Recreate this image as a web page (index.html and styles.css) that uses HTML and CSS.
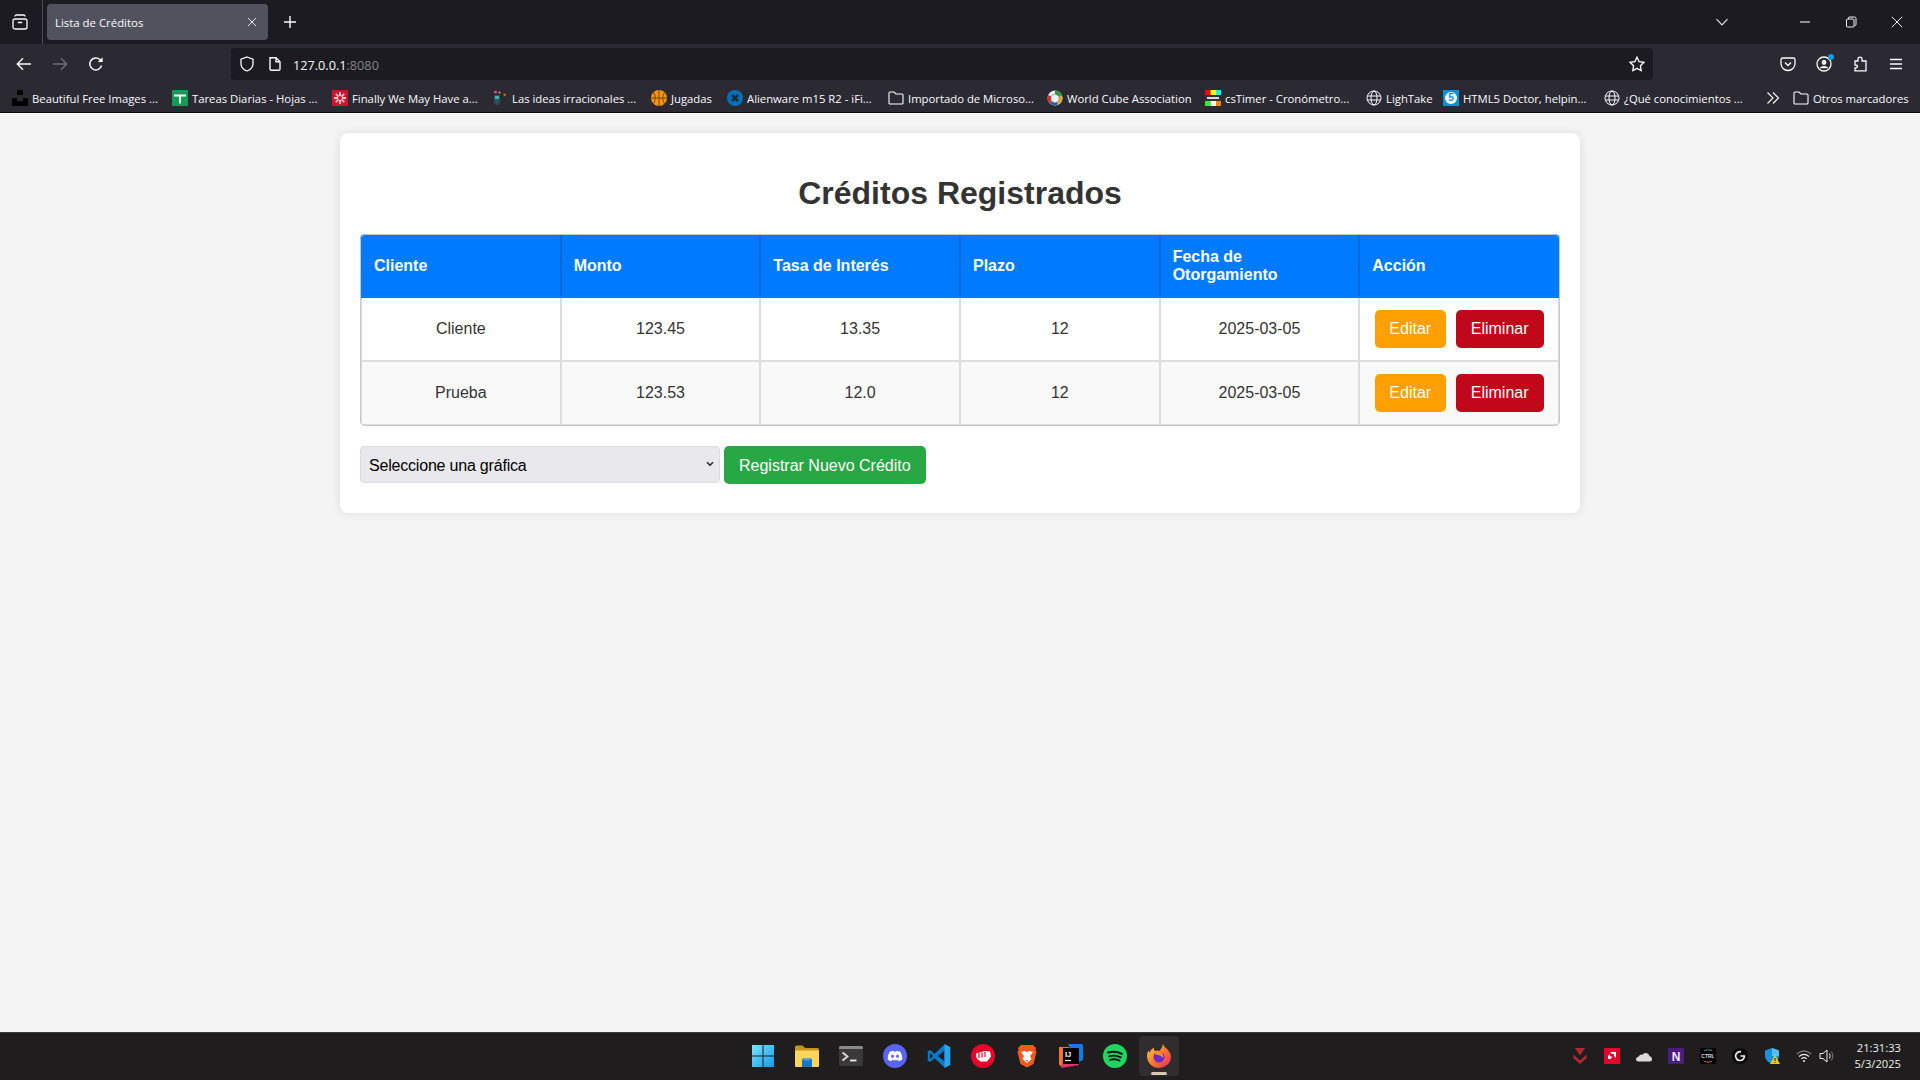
FILE: index.html
```html
<!DOCTYPE html>
<html lang="es">
<head>
<meta charset="utf-8">
<title>Lista de Créditos</title>
<link rel="stylesheet" href="styles.css">
</head>
<body>
<div class="browser">
  <header class="tabbar">
    <div class="tabs-btn">
      <svg class="i16" viewBox="0 0 16 16" fill="none" stroke="#fbfbfe" stroke-width="1.3"><rect x="1" y="5" width="14" height="10" rx="2"/><path d="M3 2.6Q3 1 4.6 1h6.8Q13 1 13 2.6M5.8 8.5h4.4"/></svg>
    </div>
    <div class="tab">
      <span class="tab-title">Lista de Créditos</span>
      <svg class="tab-close" viewBox="0 0 10 10" fill="none" stroke="#e4e4ea" stroke-width="1"><path d="M1 1l8 8M9 1l-8 8"/></svg>
    </div>
    <svg class="tab-new" viewBox="0 0 14 14" fill="none" stroke="#fbfbfe" stroke-width="1.4"><path d="M7 1v12M1 7h12"/></svg>
    <div class="tabbar-fill"></div>
    <svg class="tab-list" viewBox="0 0 14 8" fill="none" stroke="#e4e4ea" stroke-width="1.2"><path d="M1.5 1.2L7 6.8l5.5-5.6"/></svg>
    <div class="winctl">
      <svg class="i12" viewBox="0 0 12 12" fill="none" stroke="#eee" stroke-width="1.1"><path d="M1 6h10"/></svg>
      <svg class="i12" viewBox="0 0 12 12" fill="none" stroke="#eee" stroke-width="1"><rect x="1.5" y="3" width="7.5" height="8" rx="1"/><path d="M3.5 3V2Q3.5 1 4.5 1h5Q11 1 11 2.5v6q0 1-1.5 1H9"/></svg>
      <svg class="i12" viewBox="0 0 12 12" fill="none" stroke="#eee" stroke-width="1"><path d="M.8.8l10.4 10.4M11.2.8L.8 11.2"/></svg>
    </div>
  </header>

  <nav class="toolbar">
    <div class="nav-btns">
      <svg class="i16" viewBox="0 0 16 16" fill="none" stroke="#fbfbfe" stroke-width="1.4"><path d="M15 8H1.5M7 2.2L1.3 8 7 13.8"/></svg>
      <svg class="i16" viewBox="0 0 16 16" fill="none" stroke="#6f6e76" stroke-width="1.4"><path d="M1 8h13.5M9 2.2L14.7 8 9 13.8"/></svg>
      <svg class="i16" viewBox="0 0 16 16" fill="none" stroke="#fbfbfe" stroke-width="1.4"><path d="M13.6 9.5A6 6 0 1 1 12 3.6L14 5.6"/><path d="M14.6 1.2v4.9H9.8" fill="#fbfbfe" stroke="none"/></svg>
    </div>
    <div class="urlbar">
      <svg class="i16" viewBox="0 0 16 16" fill="none" stroke="#fbfbfe" stroke-width="1.3"><path d="M8 1l6 2.2v4.6c0 3.4-2.6 6-6 7.2-3.4-1.2-6-3.8-6-7.2V3.2z"/></svg>
      <svg class="i16" viewBox="0 0 16 16" fill="none" stroke="#fbfbfe" stroke-width="1.4"><path d="M3 1.7h6l4 4V13q0 1.3-1.3 1.3H4.3Q3 14.3 3 13zM9 1.7v4h4"/></svg>
      <span class="url">127.0.0.1<span class="url-port">:8080</span></span>
      <svg class="star i16" viewBox="0 0 16 16" fill="none" stroke="#fbfbfe" stroke-width="1.3"><path d="M8 1.2l2.1 4.4 4.8.7-3.5 3.4.8 4.8L8 12.3l-4.2 2.2.8-4.8L1.1 6.3l4.8-.7z"/></svg>
    </div>
    <div class="tools">
      <svg class="i16" viewBox="0 0 16 16" fill="none" stroke="#fbfbfe" stroke-width="1.3"><path d="M2.8 2h10.4Q15 2 15 3.8v3.7C15 11.500 11.800 14.500 8 14.500S1 11.500 1 7.500V3.800Q1 2 2.800 2z"/><path d="M5 6.500l3 3 3-3"/></svg>
      <span class="profile">
        <svg class="i16" viewBox="0 0 16 16" fill="none" stroke="#fbfbfe" stroke-width="1.3"><circle cx="8" cy="8" r="7"/><circle cx="8" cy="6.500" r="2.400" fill="#fbfbfe" stroke="none"/><path d="M3.500 12.300Q5 10 8 10t4.500 2.300" fill="#fbfbfe" stroke="none"/></svg>
        <span class="notify"></span>
      </span>
      <svg class="i16" viewBox="0 0 16 16" fill="none" stroke="#fbfbfe" stroke-width="1.3"><path d="M8 1.200Q10 1.200 10 3.200V5H14V14.800H3V12Q5.500 12 5.500 10.500T3 9V5H6V3.200Q6 1.200 8 1.200z"/></svg>
      <svg class="i16" viewBox="0 0 16 16" fill="none" stroke="#fbfbfe" stroke-width="1.3"><path d="M2 3.500h12M2 8h12M2 12.500h12"/></svg>
    </div>
  </nav>

  <div class="bookmarks">
    <a class="bm"><svg class="i16" viewBox="0 0 16 16"><path d="M5 0h6v5H5zM0 8h5v3h6V8h5v8H0z" fill="#000"/></svg><span>Beautiful Free Images ...</span></a>
    <a class="bm"><svg class="i16" viewBox="0 0 16 16"><rect width="16" height="16" rx="1" fill="#0f9d58"/><path d="M2 4.500h12v2H9v7H7v-7H2z" fill="#fff"/></svg><span>Tareas Diarias - Hojas ...</span></a>
    <a class="bm"><svg class="i16" viewBox="0 0 16 16"><rect width="16" height="16" fill="#d3112f"/><path d="M8 2v12M2 8h12M3.800 3.800l8.400 8.400M12.200 3.800l-8.400 8.400" stroke="#f5c7cf" stroke-width="1.800"/><circle cx="8" cy="8" r="2" fill="#d3112f"/></svg><span>Finally We May Have a...</span></a>
    <a class="bm"><svg class="i16" viewBox="0 0 16 16"><circle cx="3.500" cy="2" r="1.500" fill="#d14fa0"/><path d="M11 4.500l3-1-1 3z" fill="#ee6c2b"/><circle cx="7.500" cy="2.500" r="1" fill="#e9b43a"/><path d="M2 5h6v5.500Q8 15 5 15t-3-4.500z" fill="#2a4f5c"/><path d="M3 6h4v3H3z" fill="#3cb4a0"/></svg><span>Las ideas irracionales ...</span></a>
    <a class="bm"><svg class="i16" viewBox="0 0 16 16"><circle cx="8" cy="8" r="8" fill="#f5940f"/><path d="M8 0v16M0 8h16M2.500 2.200Q6 8 2.500 13.800M13.500 2.200Q10 8 13.500 13.800" stroke="#6b3d08" stroke-width=".9" fill="none"/></svg><span>Jugadas</span></a>
    <a class="bm"><svg class="i16" viewBox="0 0 16 16"><circle cx="8" cy="8" r="8" fill="#0071bc"/><path d="M5 5l6 6M11 5l-6 6" stroke="#1c2a3a" stroke-width="2.600"/></svg><span>Alienware m15 R2 - iFi...</span></a>
    <a class="bm"><svg class="i16" viewBox="0 0 16 16" fill="none" stroke="#fbfbfe" stroke-width="1.100"><path d="M1 3q0-1 1-1h4l2 2h6q1 0 1 1v8q0 1-1 1H2q-1 0-1-1z"/></svg><span>Importado de Microso...</span></a>
    <a class="bm"><svg class="i16" viewBox="0 0 16 16"><circle cx="8" cy="8" r="7.500" fill="#eee"/><path d="M8 .5A7.500 7.500 0 0 1 15 6L8 8z" fill="#2a9d3f"/><path d="M15 6a7.500 7.500 0 0 1-4 8.500L8 8z" fill="#e0b21c"/><path d="M11 14.500a7.500 7.500 0 0 1-8 -1L8 8z" fill="#1a5fb4"/><path d="M3 13.500A7.500 7.500 0 0 1 1 5L8 8z" fill="#c8352b"/><path d="M8 4l4 2v5l-4 2-4-2V6z" fill="#f2f2f2" stroke="#555" stroke-width=".5"/></svg><span>World Cube Association</span></a>
    <a class="bm"><svg class="i16" viewBox="0 0 16 16"><path d="M0 0h5.500v5H0z" fill="#f00"/><path d="M5.500 0H11v5H5.500z" fill="#ff0"/><path d="M11 0h5v5h-5z" fill="#0ff"/><path d="M0 5h16v6H0z" fill="#333"/><path d="M2 7h12v2H2z" fill="#ddd"/><path d="M0 11h5.500v5H0z" fill="#3e3"/><path d="M5.500 11H11v5H5.500z" fill="#fff"/><path d="M11 11h5v5h-5z" fill="#f80"/></svg><span>csTimer - Cronómetro...</span></a>
    <a class="bm"><svg class="i16" viewBox="0 0 16 16" fill="none" stroke="#fbfbfe" stroke-width="1"><circle cx="8" cy="8" r="7"/><ellipse cx="8" cy="8" rx="3" ry="7"/><path d="M1.300 6h13.400M1.300 10h13.400"/></svg><span>LighTake</span></a>
    <a class="bm"><svg class="i16" viewBox="0 0 16 16"><rect width="16" height="16" fill="#0d8fd8"/><circle cx="8" cy="8" r="6" fill="#fff"/><text x="8" y="11" text-anchor="middle" class="fav-text" fill="#0d8fd8">5</text></svg><span>HTML5 Doctor, helpin...</span></a>
    <a class="bm"><svg class="i16" viewBox="0 0 16 16" fill="none" stroke="#fbfbfe" stroke-width="1"><circle cx="8" cy="8" r="7"/><ellipse cx="8" cy="8" rx="3" ry="7"/><path d="M1.300 6h13.400M1.300 10h13.400"/></svg><span>¿Qué conocimientos ...</span></a>
    <a class="bm"><svg class="i14" viewBox="0 0 14 14" fill="none" stroke="#fbfbfe" stroke-width="1.100"><path d="M1.500 1.500L7 7l-5.500 5.500M7 1.500L12.500 7 7 12.500"/></svg></a>
    <a class="bm"><svg class="i16" viewBox="0 0 16 16" fill="none" stroke="#fbfbfe" stroke-width="1.100"><path d="M1 3q0-1 1-1h4l2 2h6q1 0 1 1v8q0 1-1 1H2q-1 0-1-1z"/></svg><span>Otros marcadores</span></a>
  </div>

  <main class="viewport">
    <section class="card">
      <h1 class="title">Créditos Registrados</h1>
      <div class="table-wrap">
        <table class="credits">
          <thead>
            <tr><th>Cliente</th><th>Monto</th><th>Tasa de Interés</th><th>Plazo</th><th>Fecha de Otorgamiento</th><th>Acción</th></tr>
          </thead>
          <tbody>
            <tr><td>Cliente</td><td>123.45</td><td>13.35</td><td>12</td><td>2025-03-05</td>
              <td><a class="btn btn-edit">Editar</a><a class="btn btn-del">Eliminar</a></td></tr>
            <tr><td>Prueba</td><td>123.53</td><td>12.0</td><td>12</td><td>2025-03-05</td>
              <td><a class="btn btn-edit">Editar</a><a class="btn btn-del">Eliminar</a></td></tr>
          </tbody>
        </table>
      </div>
      <div class="actions">
        <div class="select-wrap">
          <select class="chart-select"><option>Seleccione una gráfica</option></select>
          <svg class="select-arrow" viewBox="0 0 8 6" fill="none" stroke="#222" stroke-width="1.500"><path d="M1 1.200l3 3 3-3"/></svg>
        </div>
        <a class="btn btn-new">Registrar Nuevo Crédito</a>
      </div>
    </section>
  </main>

  <footer class="taskbar">
    <div></div>
    <div class="apps">
      <svg class="i24" viewBox="0 0 24 24"><defs><linearGradient id="w" x1="0" y1="0" x2="1" y2="1"><stop offset="0" stop-color="#7ee3fb"/><stop offset="1" stop-color="#0d9cf0"/></linearGradient></defs><path d="M1 1h10.500v10.500H1zM12.500 1H23v10.500H12.500zM1 12.500h10.500V23H1zM12.500 12.500H23V23H12.500z" fill="url(#w)"/></svg>
      <svg class="i24" viewBox="0 0 24 24"><path d="M0 3q0-1.500 1.500-1.500h6L10 4h12.500Q24 4 24 5.500V8H0z" fill="#c8941a"/><path d="M0 6.500h24V22q0 1-1 1H1q-1 0-1-1z" fill="#fcd55e"/><path d="M7 16q0-1.500 1.500-1.500h7Q17 14.500 17 16v7H7z" fill="#1a76c4"/><path d="M9 14.500h6v2H9z" fill="#49a4e8"/></svg>
      <svg class="i24" viewBox="0 0 24 24"><rect y="2" width="24" height="20" rx="1.500" fill="#3a3a3a"/><path d="M0 3.500Q0 2 1.500 2h21Q24 2 24 3.500V5H0z" fill="#8a8a8a"/><path d="M3.500 8.500l5 4-5 4" stroke="#ddd" stroke-width="1.800" fill="none"/><path d="M11 16.500h6.500" stroke="#eee" stroke-width="1.800"/></svg>
      <svg class="i24" viewBox="0 0 24 24"><circle cx="12" cy="12" r="12" fill="#5865f2"/><path d="M6.500 8Q9 6.800 10.500 6.800l.4.8h2.200l.4-.8Q15 6.800 17.500 8q2 3.500 1.800 7.500-1.600 1.300-3.500 1.700l-.9-1.300q-2.900.8-5.800 0l-.9 1.300q-1.900-.4-3.500-1.700Q4.500 11.500 6.500 8z" fill="#fff"/><ellipse cx="9.500" cy="12.200" rx="1.400" ry="1.600" fill="#5865f2"/><ellipse cx="14.500" cy="12.200" rx="1.400" ry="1.600" fill="#5865f2"/></svg>
      <svg class="i24" viewBox="0 0 24 24"><path fill-rule="evenodd" d="M17.500.2L7.800 9.700 3 6 .8 7.200v9.600L3 18l4.800-3.700 9.700 9.500 5.700-2.700V2.900zM17.500 6.500L11 12l6.500 5.500zM3 9v6l3-3z" fill="#0a78c8"/><path d="M17.500.2l5.700 2.700v18.200l-5.700 2.700z" fill="#2aa3ee"/></svg>
      <svg class="i24" viewBox="0 0 24 24"><circle cx="12" cy="12" r="12" fill="#e5062a"/><path d="M5 9.500l9-2.500 5 .5 1 5-2 2.500-2 2.500H9.500L7 15.500 5.500 14z" fill="#fff"/><path d="M8 9v5M11 8.500v5M14 8v5" stroke="#e5062a" stroke-width="1.200"/></svg>
      <svg class="i24" viewBox="0 0 24 24"><path d="M6 1h12l3 3-.5 2 1 2-3 12-6.500 3.500L5.500 20l-3-12 1-2L3 4z" fill="#f25a1d"/><path d="M6 8l3.500-1L12 8l2.500-1L18 8l-3 4 1.500 3L12 19l-4.500-4L9 12z" fill="#fff"/><path d="M10.500 16h3L12 17.500z" fill="#f25a1d"/></svg>
      <svg class="i24" viewBox="0 0 24 24"><path d="M9 0h13q2 0 2 2v14l-6 3z" fill="#0d7de8"/><path d="M0 3h10L6 22 2 22Q0 22 0 20z" fill="#f9722c"/><path d="M2 24l18-3-3-6H4z" fill="#e6336c"/><rect x="4" y="4" width="16" height="16" fill="#000"/><text x="6" y="12.500" class="ij-text" fill="#fff">IJ</text><path d="M6 16.500h6" stroke="#fff" stroke-width="1.200"/></svg>
      <svg class="i24" viewBox="0 0 24 24"><circle cx="12" cy="12" r="12" fill="#1ed760"/><path d="M5 8.500q7.500-2 14 1.300M6 12.300q6.200-1.700 11.800 1M7 15.800q5-1.300 9.600.8" stroke="#111" stroke-width="1.900" fill="none" stroke-linecap="round"/></svg>
      <span class="app-active">
        <svg class="i24" viewBox="0 0 24 24"><defs><linearGradient id="ff" x1="0" y1="0" x2="1" y2="1"><stop offset="0" stop-color="#ffd13f"/><stop offset=".5" stop-color="#ff7a2a"/><stop offset="1" stop-color="#e6216a"/></linearGradient></defs><path d="M16 0q1 3 4 5 4 4 4 8 0 5-4 8-3.500 3-8 3-5 0-8.500-3.500T0 12Q0 9 1.500 6.500 2 8 3 8.500 4 5 7 3.500 6.500 6 8 7q2-1 4 0 3-2 4-7z" fill="url(#ff)"/><circle cx="12" cy="13" r="5.500" fill="#6b2bc2"/><path d="M7 8q4-2 7 0 3 2 2 6-2-3-5-3-3 0-4-3z" fill="#ff8a2a"/></svg>
      </span>
    </div>
    <div class="tray">
      <svg class="i16" viewBox="0 0 16 16"><path d="M3 0h10L8 7.500zM1.500 6.500L8 12.500l6.500-6V10L8 16 1.500 10z" fill="#b02a30"/></svg>
      <svg class="i16" viewBox="0 0 16 16"><rect width="16" height="16" fill="#e4002b"/><path d="M6 4h6v6l-2-2V6H8zM4 8l2-2v2.500h2.500L6.500 11H4z" fill="#fff"/></svg>
      <svg class="i16" viewBox="0 0 16 16"><path d="M4 13.500h9.500Q16 13.500 16 11t-2.500-2.800Q12.500 5 9.500 5 7.500 5 6.500 6.800 4 6 2.800 8.500 0 9 0 11.200t2.500 2.300z" fill="#dcdcdc"/></svg>
      <svg class="i16" viewBox="0 0 16 16"><rect width="16" height="16" fill="#4d1a82"/><text x="8" y="12.500" text-anchor="middle" class="n-text" fill="#eee">N</text></svg>
      <svg class="i16" viewBox="0 0 16 16"><rect width="16" height="16" fill="#000"/><text x="8" y="10" text-anchor="middle" class="ctrl-text" fill="#ddd">CTRL</text><path d="M4 2.500q4-1.500 8 0" stroke="#2aa58a" fill="none"/><path d="M4 13.500q4 1.500 8 0" stroke="#c96a2a" fill="none"/></svg>
      <svg class="i16" viewBox="0 0 16 16"><circle cx="8" cy="8" r="8" fill="#0b0b0b"/><path d="M9 3.800A4.400 4.400 0 1 0 12.400 8H8.500" stroke="#eee" stroke-width="1.700" fill="none"/></svg>
      <svg class="i16" viewBox="0 0 16 16"><path d="M8 0l7 2.500V8c0 3.500-3 6.500-7 8-4-1.500-7-4.500-7-8V2.500z" fill="#1b8fe0"/><path d="M8 0l7 2.500V8H8z" fill="#58bdf2"/><path d="M11 7l5 9H6z" fill="#f5c518"/><path d="M11 10v3M11 14v1" stroke="#111"/></svg>
      <svg class="i16" viewBox="0 0 16 16" fill="none" stroke="#eee" stroke-width="1.100"><path d="M.7 6.200Q8-.5 15.300 6.200" stroke="#888"/><path d="M3 8.500q5-4.300 10 0M5.300 10.800q2.700-2.300 5.400 0"/><circle cx="8" cy="13" r="1" fill="#eee" stroke="none"/></svg>
      <svg class="i16 speaker" viewBox="0 0 16 16" fill="none" stroke="#eee" stroke-width="1"><path d="M1 5.500h3L8 2v12L4 10.500H1z"/><path d="M10.500 5.500q1.500 2.500 0 5"/><path d="M12.500 3.500q3 4.500 0 9" stroke="#777"/></svg>
      <div class="clock"><span>21:31:33</span><span>5/3/2025</span></div>
    </div>
  </footer>
</div>
</body>
</html>
```
FILE: styles.css
```css
* { box-sizing: border-box; }
html, body { margin: 0; height: 100%; }
body { overflow: hidden; font-family: "Liberation Sans", Arial, sans-serif; }
.browser { display: flex; flex-direction: column; height: 1080px; }
svg { display: block; flex: none; }
.i12 { width: 12px; height: 12px; }
.i14 { width: 14px; height: 14px; }
.i16 { width: 16px; height: 16px; }
.i24 { width: 24px; height: 24px; }

/* Tab strip */
.tabbar { height: 44px; flex: none; display: flex; align-items: center; background: #1c1b22; color: #fbfbfe; font-family: "Open Sans", sans-serif; }
.tabs-btn { width: 43px; height: 44px; display: flex; align-items: center; padding-left: 12px; border-right: 1px solid #4a4a54; }
.tab { width: 221px; height: 36px; margin-left: 4px; padding: 0 11px 0 8px; background: #52525e; border-radius: 4px; display: flex; align-items: center; justify-content: space-between; }
.tab-title { font-size: 11.4px; }
.tab-close { width: 10px; height: 10px; }
.tab-new { width: 14px; height: 14px; margin-left: 15px; }
.tabbar-fill { flex: 1; }
.tab-list { width: 14px; height: 8px; margin-right: 70px; }
.winctl { display: flex; gap: 34px; padding-right: 17px; }

/* Toolbar */
.toolbar { height: 36px; flex: none; display: flex; align-items: flex-start; background: #2b2a33; padding-top: 4px; }
.nav-btns { width: 231px; height: 32px; display: flex; align-items: center; gap: 20px; padding-left: 16px; }
.urlbar { width: 1422px; height: 32px; background: #1c1b22; border-radius: 4px; display: flex; align-items: center; gap: 12px; padding: 0 8px; font-family: "Open Sans", sans-serif; }
.url { font-size: 12.7px; color: #fbfbfe; margin-left: -2px; padding-top: 1px; flex: 1; }
.url-port { color: #85848a; }
.tools { height: 32px; display: flex; align-items: center; gap: 20px; padding-left: 127px; }
.profile { position: relative; display: block; }
.notify { position: absolute; top: -2px; right: -2px; width: 6px; height: 6px; border-radius: 50%; background: #00a0e8; }

/* Bookmarks */
.bookmarks { height: 33px; flex: none; padding: 4px 0 0 12px; background: #2b2a33; border-bottom: 1px solid #0b0b0f; display: grid; align-items: center; grid-template-columns: 160px 160px 160px 159px 76px 161px 159px 158px 161px 77px 161px 162px 27px 120px; font-family: "Open Sans", sans-serif; font-size: 11.3px; color: #fbfbfe; }
.bm { display: flex; align-items: center; gap: 4px; white-space: nowrap; min-width: 0; }
.fav-text { font: bold 10px "Liberation Sans", sans-serif; }
.ij-text { font: bold 7.5px "Liberation Sans", sans-serif; }
.n-text { font: bold 12px "Liberation Sans", sans-serif; }
.ctrl-text { font: bold 5px "Liberation Sans", sans-serif; }

/* Page */
.viewport { flex: 1; background: #f4f4f4; min-height: 0; }
.card { width: 1240px; margin: 20px auto 0; padding: 20px 20px 29px; background: #fff; border-radius: 8px; box-shadow: 0 0 10px rgba(0, 0, 0, .1); }
.title { margin: 22px 0; font-size: 32px; font-weight: 700; line-height: 37px; text-align: center; color: #333; }
.table-wrap { position: relative; border-radius: 5px; overflow: hidden; }
.table-wrap::after { content: ""; position: absolute; inset: 0; border: 1px solid #c8c8c8; border-radius: 5px; pointer-events: none; }
.credits { width: 100%; border-collapse: collapse; table-layout: fixed; font-size: 16px; color: #333; }
.credits th, .credits td { padding: 12px; border: 2px solid #ddd; text-align: center; line-height: 18px; }
.credits th { background: #007bff; color: #fff; text-align: left; border-color: #0069d9; font-weight: 700; border-top-color: #007bff; border-bottom-color: #007bff; }
.credits th:first-child { border-left-color: #007bff; }
.credits th:last-child { border-right-color: #007bff; }
.credits tbody tr:nth-child(even) { background: #f9f9f9; }
.btn { display: inline-block; padding: 10px 15px; line-height: 18px; font-size: 16px; color: #fff; border-radius: 5px; vertical-align: middle; }
.btn-edit { background: #ffa000; margin-right: 10px; padding: 10px 14.6px; }
.btn-del { background: #c1081a; }
.btn-new { background: #28a745; padding: 11px 15px 9px; }
.actions { display: flex; align-items: flex-start; gap: 4px; margin-top: 20px; }
.select-wrap { position: relative; width: 360px; }
.chart-select { display: block; width: 100%; height: 37px; padding: 2px 8px 0; font: 16px "Liberation Sans", sans-serif; letter-spacing: -.2px; color: #000; background-color: #e9e9ed; border: 1px solid #ddd; border-radius: 4px; appearance: none; }
.select-arrow { position: absolute; right: 6px; top: 15px; width: 8px; height: 6px; pointer-events: none; }

/* Taskbar */
.taskbar { height: 48px; flex: none; display: grid; grid-template-columns: 1fr auto 1fr; align-items: center; padding-bottom: 1px; background: #1f1d1d; border-top: 1px solid #3c3a3a; }
.apps { display: flex; align-items: center; gap: 20px; margin-left: 1px; }
.app-active { position: relative; display: block; }
.app-active::before { content: ""; position: absolute; inset: -8px; background: #2f2d2d; border-radius: 4px; z-index: 0; }
.app-active::after { content: ""; position: absolute; left: 4px; right: 4px; bottom: -7px; height: 3px; border-radius: 2px; background: #d9c6b2; }
.app-active svg { position: relative; }
.tray { display: flex; align-items: center; justify-self: end; gap: 16px; padding-right: 19px; }
.speaker { margin-left: -9px; }
.clock { display: flex; flex-direction: column; align-items: flex-end; margin-left: 3px; font-family: "Open Sans", sans-serif; font-size: 11.2px; line-height: 16px; color: #eee; }
```
